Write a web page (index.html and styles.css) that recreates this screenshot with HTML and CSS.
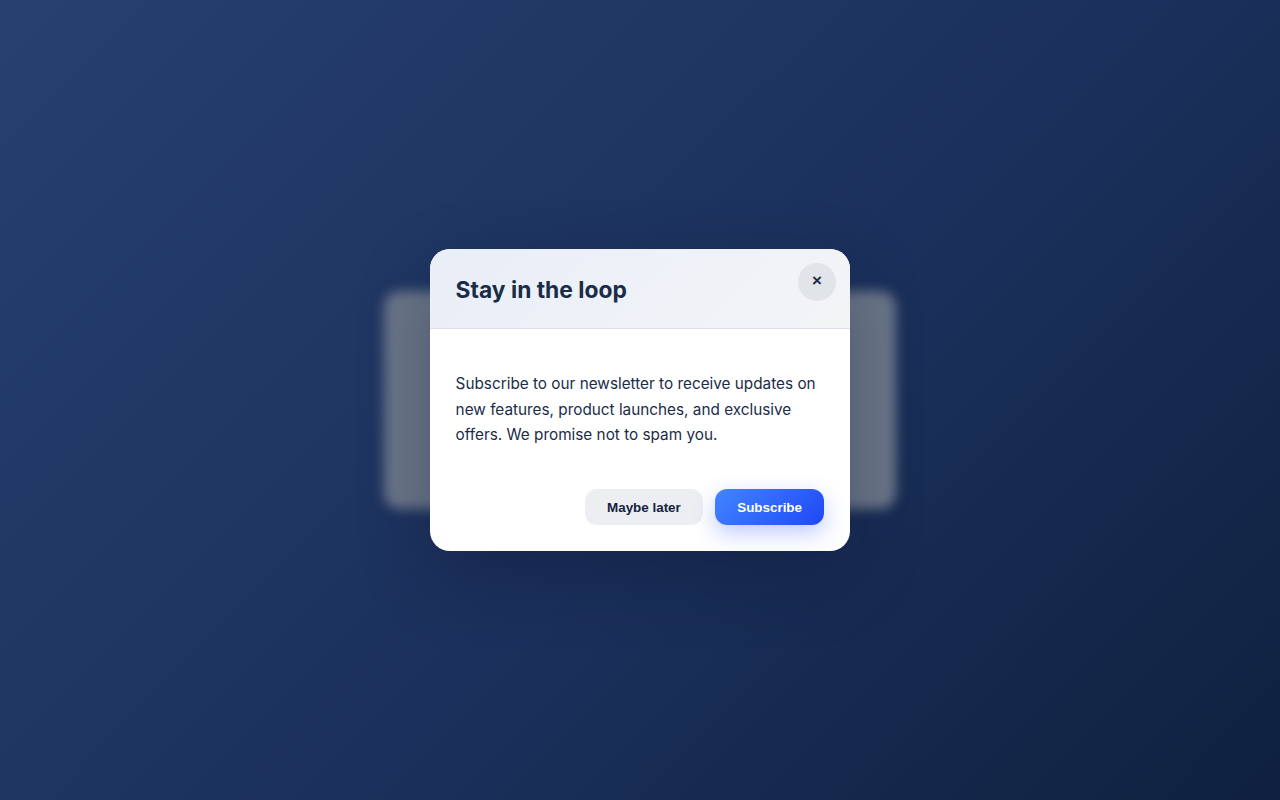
FILE: index.html
```html
<!DOCTYPE html>
<html lang="en">
<head>
<meta charset="utf-8">
<title>Stay in the loop</title>
<link rel="stylesheet" href="styles.css">
</head>
<body>
<div class="ghost"></div>
<div class="modal">
  <header class="head">
    <h2 class="title">Stay in the loop</h2>
    <button class="close">×</button>
  </header>
  <div class="body">
    <p class="copy">Subscribe to our newsletter to receive updates on new features, product launches, and exclusive offers. We promise not to spam you.</p>
  </div>
  <footer class="foot">
    <button class="btn later">Maybe later</button>
    <button class="btn sub">Subscribe</button>
  </footer>
</div>
</body>
</html>
```
FILE: styles.css
```css
* { box-sizing: border-box; }
html, body { height: 100%; }
body {
  margin: 0;
  height: 800px;
  overflow: hidden;
  display: flex;
  align-items: center;
  justify-content: center;
  background: linear-gradient(135deg, #27406f 0%, #1b305c 55%, #0f213f 100%);
  font-family: Inter, "Liberation Sans", sans-serif;
}
.ghost {
  position: absolute;
  left: 384px;
  top: 291px;
  width: 512px;
  height: 218px;
  border-radius: 16px;
  background: #6b7689;
  filter: blur(6px);
}
.modal {
  position: relative;
  width: 420px;
  height: 302px;
  background: #fff;
  border-radius: 20px;
  box-shadow: 0 24px 70px rgba(10, 20, 40, 0.32);
}
.head {
  position: relative;
  height: 80px;
  padding: 1px 25.6px 0;
  display: flex;
  align-items: center;
  border-bottom: 1px solid #dcdfea;
  border-radius: 20px 20px 0 0;
  background: linear-gradient(135deg, #e9eef8, #f3f4f6);
}
.title {
  margin: 0;
  font-size: 22.8px;
  font-weight: 700;
  color: #1b2c48;
}
.close {
  position: absolute;
  top: 14px;
  right: 14px;
  width: 38px;
  height: 38px;
  padding: 0 0 2px;
  border: 0;
  border-radius: 50%;
  background: #e1e4e9;
  color: #1b2c48;
  font: 700 17px/36px "Liberation Sans", sans-serif;
}
.body { padding: 42px 25.6px 0; }
.copy {
  margin: 0;
  font-size: 15.32px;
  line-height: 25.6px;
  color: #1b2c48;
}
.foot {
  display: flex;
  justify-content: flex-end;
  gap: 12px;
  padding: 41px 26px 0;
}
.btn {
  height: 36px;
  padding: 1px 22px 0;
  border: 0;
  border-radius: 12px;
  font: 700 13.4px "Liberation Sans", sans-serif;
}
.later { padding: 1px 22.5px 0; background: #eceef1; color: #14233f; }
.sub {
  background: linear-gradient(135deg, #4285ff, #1f48f5);
  color: #fff;
  box-shadow: 0 8px 22px rgba(40, 80, 255, 0.3);
}
```
